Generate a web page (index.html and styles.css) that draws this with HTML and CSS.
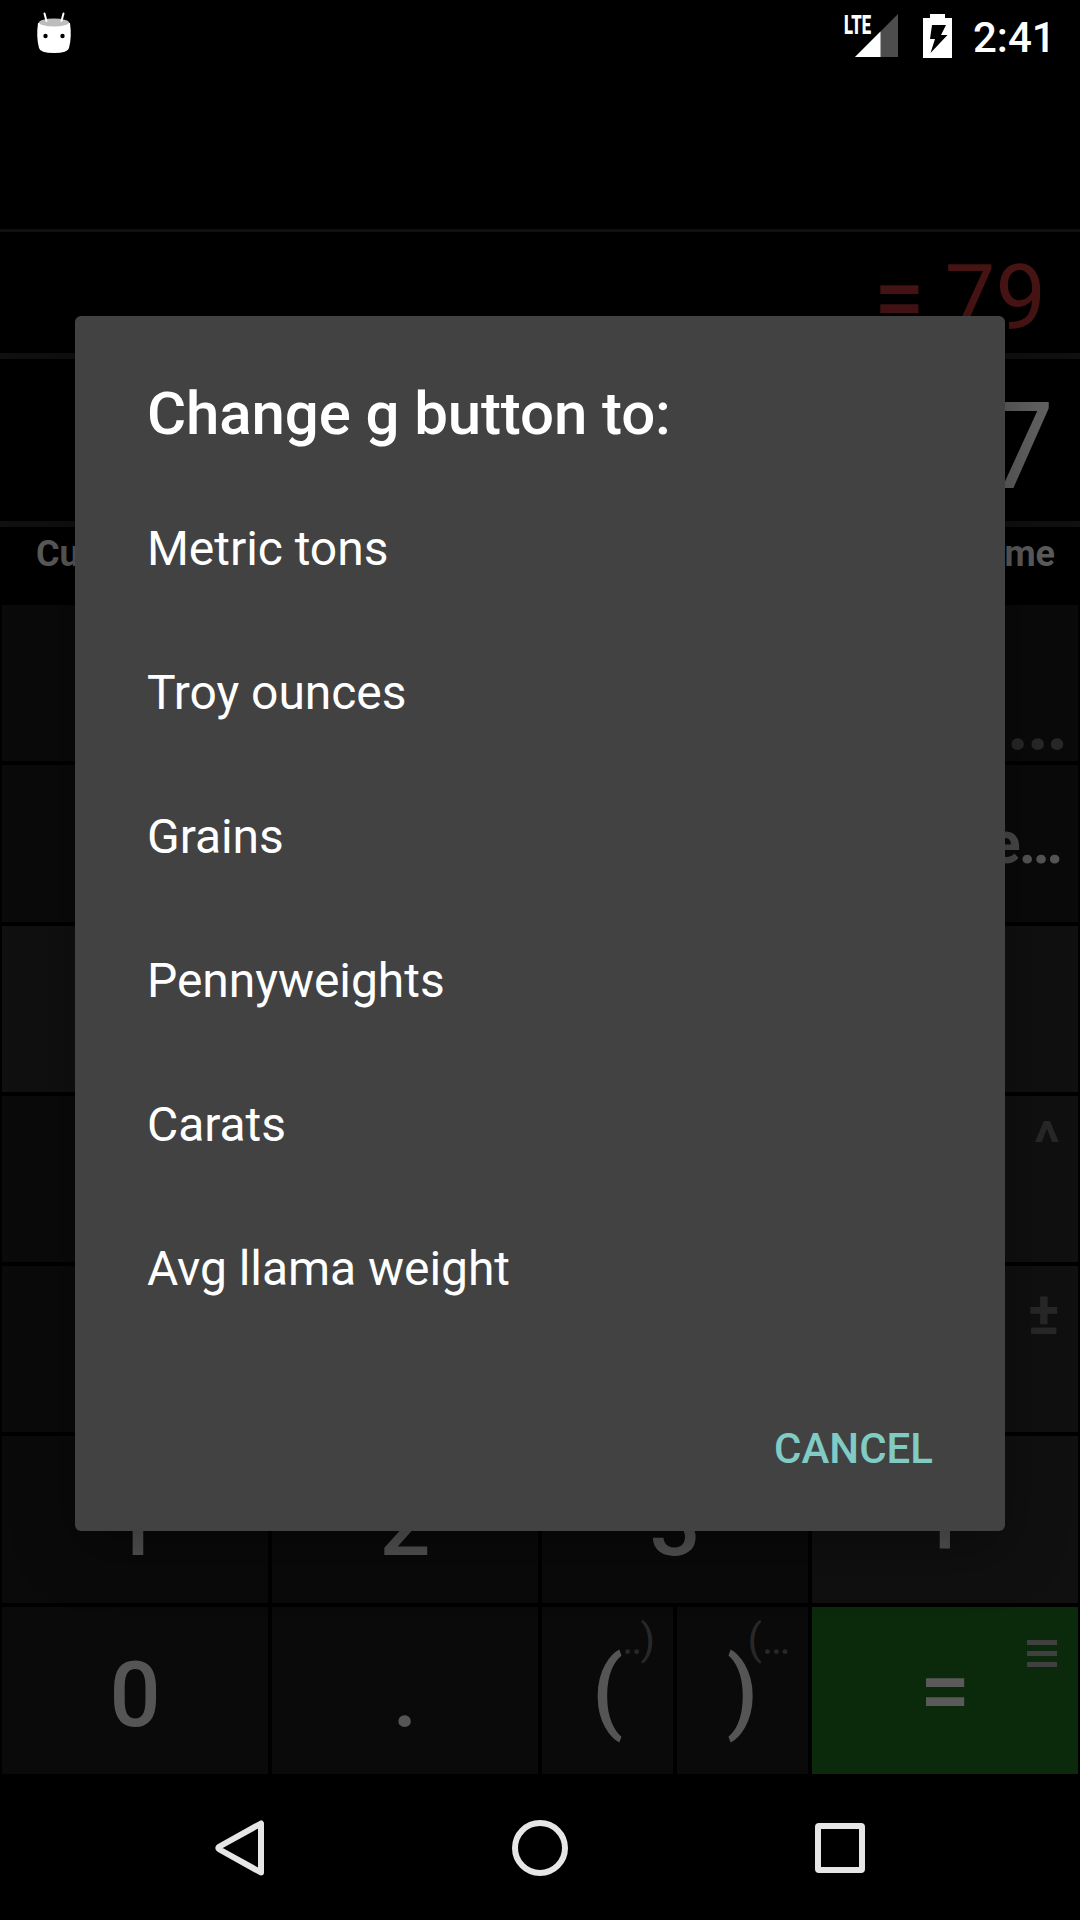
FILE: index.html
```html
<!DOCTYPE html>
<html lang="en">
<head>
<meta charset="utf-8">
<title>Calculator</title>
<link rel="stylesheet" href="styles.css">
</head>
<body>
<header class="status">
  <svg class="robot" width="36" height="44" viewBox="0 0 36 44">
    <path d="M2 12Q18 5 34 12Q36 26 33 37Q32 42 18 42Q4 42 3 37Q0 26 2 12Z" fill="#fff"/>
    <ellipse cx="18" cy="11.5" rx="15" ry="4" fill="#bdbdbd"/>
    <path d="M8.5 2.500L10.500 10M27.500 2.500L25.500 10" stroke="#fff" stroke-width="2" stroke-linecap="round"/>
    <circle cx="9.500" cy="25" r="2.200"/><circle cx="26.500" cy="25" r="2.200"/>
  </svg>
  <div class="signal">
    <span class="lte">LTE</span>
    <svg width="43" height="43" viewBox="0 0 43 43">
      <path d="M0 43L43 0V43Z" fill="#4d4d4d"/><path d="M0 43L25.500 17.500V43Z" fill="#fff"/>
    </svg>
  </div>
  <svg class="battery" width="29" height="44" viewBox="0 0 29 44">
    <path d="M0 4H7V0H22V4H29V44H0Z" fill="#fff"/>
    <path d="M9 11H23L18 21H24.500L7.500 39L12 25H7Z" fill="#000"/>
  </svg>
  <span class="clock">2:41</span>
</header>

<main class="calc">
  <div class="history"></div>
  <div class="result"><span class="eq">=</span> 79</div>
  <div class="entry">7</div>
  <div class="tabs"><span>Cu</span><span>me</span></div>
  <div class="keys">
    <div class="key wide"><span class="hint more">…</span></div>
    <div class="key wide"><span class="unit"><span class="letter">e</span>…</span></div>
    <div class="key wide op"></div>
    <div class="key span3"></div><div class="key op"><span class="hint caret">^</span></div>
    <div class="key span3"></div><div class="key op"><span class="hint sign">±</span></div>
    <div class="key">1</div><div class="key">2</div><div class="key">3</div><div class="key op plus">+</div>
    <div class="key">0</div><div class="key">.</div>
    <div class="pair">
      <div class="key paren open"><span class="hint small"><span class="dots">..</span>)</span><span class="sym">(</span></div>
      <div class="key paren close"><span class="hint small">(…</span><span class="sym">)</span></div>
    </div>
    <div class="key equals">=
      <svg class="menu" width="30" height="27" viewBox="0 0 30 27"><path d="M0 2.500H30M0 13.500H30M0 24.500H30" stroke="#404040" stroke-width="5"/></svg>
    </div>
  </div>
</main>

<nav class="nav">
  <svg width="56" height="56" viewBox="0 0 56 56"><path d="M49 3.500V52.500L7.500 29.500Q5 28 7.500 26.500Z"/></svg>
  <svg width="56" height="56" viewBox="0 0 56 56"><circle cx="28" cy="28" r="25"/></svg>
  <svg width="56" height="56" viewBox="0 0 56 56"><rect x="6" y="6" width="44" height="44" rx="1"/></svg>
</nav>

<section class="dialog" role="dialog">
  <h1 class="title">Change g button to:</h1>
  <ul class="list">
    <li>Metric tons</li>
    <li>Troy ounces</li>
    <li>Grains</li>
    <li>Pennyweights</li>
    <li>Carats</li>
    <li>Avg llama weight</li>
  </ul>
  <div class="actions"><button class="cancel">CANCEL</button></div>
</section>
</body>
</html>
```
FILE: styles.css
```css
* { box-sizing: border-box; }
body {
  margin: 0;
  position: relative;
  width: 1080px;
  height: 1920px;
  overflow: hidden;
  background: #000;
  color: #555;
  font-family: Roboto, "Noto Sans", sans-serif;
  display: flex;
  flex-direction: column;
}
.status {
  height: 72px;
  flex: none;
  display: flex;
  align-items: flex-start;
  padding: 0 29px 0 36px;
  color: #fff;
}
.robot { margin-top: 11px; }
.signal {
  position: relative;
  margin: 14px 25px 0 auto;
  height: 43px;
}
.signal svg { display: block; }
.lte {
  position: absolute;
  left: -11px;
  top: -2px;
  font-size: 26px;
  line-height: 26px;
  font-weight: 900;
  transform: scaleX(.64);
  transform-origin: left;
}
.battery { margin-top: 14px; }
.clock {
  width: 78px;
  margin-left: 21px;
  font-size: 42px;
  line-height: 50px;
  margin-top: 13px;
  font-weight: 500;
}
.calc { flex: none; height: 1702px; display: flex; flex-direction: column; }
.history { height: 160px; border-bottom: 3px solid #101010; }
.result {
  height: 127px;
  border-bottom: 6px solid #101010;
  padding: 6px 34px 0 0;
  text-align: right;
  font-size: 90px;
  line-height: 121px;
  color: #471414;
}
.eq { font-weight: 500; letter-spacing: -2px; }
.entry {
  height: 168px;
  border-bottom: 6px solid #101010;
  padding-right: 26px;
  text-align: right;
  font-size: 120px;
  line-height: 176px;
  color: #626262;
}
.tabs {
  height: 78px;
  display: flex;
  justify-content: space-between;
  padding: 6px 25px 0 36px;
  font-size: 36px;
  line-height: 42px;
  font-weight: 700;
  color: #5c5c5c;
}
.keys {
  height: 1169px;
  padding: 0 2px;
  display: grid;
  grid-template-columns: repeat(4, 266px);
  grid-template-rows: 156px 157px 166px 166px 166px 167px 167px;
  gap: 4px;
}
.key {
  position: relative;
  background: #0a0a0a;
  display: flex;
  align-items: center;
  justify-content: center;
  padding-top: 11px;
  font-size: 90px;
  line-height: 106px;
  font-weight: 500;
}
.op { background: #101010; }
.wide { grid-column: span 4; }
.span3 { grid-column: span 3; }
.pair { display: grid; grid-template-columns: 131px 131px; gap: 4px; }
.paren { padding-top: 3px; }
.hint { position: absolute; color: #282828; }
.more { right: 9px; top: 61px; font-weight: 500; }
.unit { position: absolute; right: 15px; top: 43px; font-size: 60px; line-height: 70px; font-weight: 700; }
.letter { letter-spacing: -2px; color: #4a4a4a; }
.caret { right: 18px; top: 12px; font-size: 60px; line-height: 70px; font-weight: 700; }
.sign { right: 18px; top: 13px; font-size: 60px; line-height: 70px; font-weight: 700; }
.small { font-size: 42px; line-height: 50px; top: 8px; right: 18px; font-weight: 400; }
.dots { letter-spacing: -2px; }
.sym { position: relative; }
.equals { background: #0b290b; color: #5a5a5a; padding-top: 3px; }
.menu { position: absolute; right: 21px; top: 33px; }
.nav {
  flex: 1;
  display: flex;
  justify-content: center;
  align-items: center;
  gap: 244px;
  padding-top: 2px;
}
.nav svg { fill: none; stroke: #e6e6e6; stroke-width: 6; stroke-linejoin: round; }
.dialog {
  position: absolute;
  left: 75px;
  top: 316px;
  width: 930px;
  height: 1215px;
  border-radius: 6px;
  background: #424242;
  color: #fff;
  box-shadow: 0 18px 60px rgba(0, 0, 0, .35);
  display: flex;
  flex-direction: column;
}
.title {
  margin: 0;
  padding: 63px 72px 28px;
  font-size: 60px;
  line-height: 70px;
  font-weight: 500;
  letter-spacing: -.12px;
}
.list { list-style: none; margin: 0; padding: 0; }
.list li { height: 144px; padding: 0 72px; font-size: 48px; line-height: 144px; letter-spacing: -.05px; }
.actions { display: flex; justify-content: flex-end; margin-top: 36px; padding-right: 48px; }
.cancel {
  border: 0;
  background: none;
  color: #80cbc4;
  height: 144px;
  padding: 0 24px;
  font: 500 42px/50px Roboto, sans-serif;
}
```
